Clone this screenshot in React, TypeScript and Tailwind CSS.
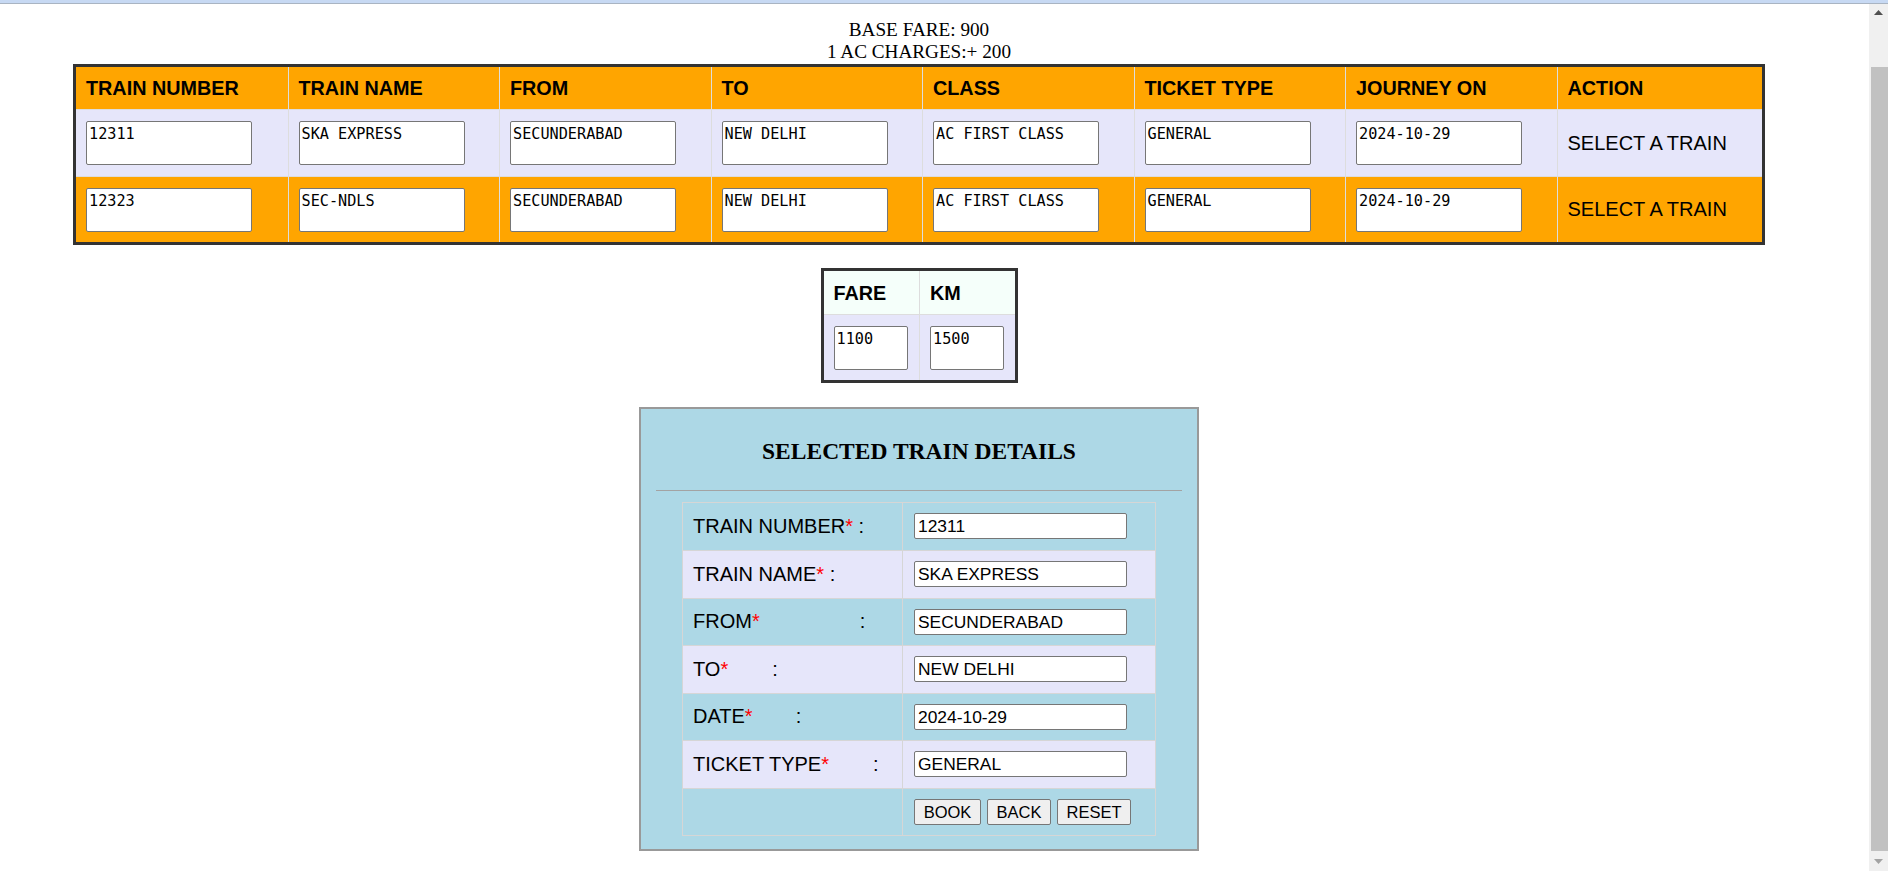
import React from "react";

const columns = [
  "TRAIN NUMBER",
  "TRAIN NAME",
  "FROM",
  "TO",
  "CLASS",
  "TICKET TYPE",
  "JOURNEY ON",
  "ACTION",
];

const trains = [
  {
    no: "12311",
    name: "SKA EXPRESS",
    from: "SECUNDERABAD",
    to: "NEW DELHI",
    cls: "AC FIRST CLASS",
    type: "GENERAL",
    date: "2024-10-29",
    bg: "bg-[#e6e6fa]",
  },
  {
    no: "12323",
    name: "SEC-NDLS",
    from: "SECUNDERABAD",
    to: "NEW DELHI",
    cls: "AC FIRST CLASS",
    type: "GENERAL",
    date: "2024-10-29",
    bg: "bg-[#ffa500]",
  },
];

// label, gap before colon (px), field value
const details = [
  { label: "TRAIN NUMBER", gap: "ml-[5.5px]", value: "12311" },
  { label: "TRAIN NAME", gap: "ml-[5.5px]", value: "SKA EXPRESS" },
  { label: "FROM", gap: "ml-[100px]", value: "SECUNDERABAD" },
  { label: "TO", gap: "ml-[44px]", value: "NEW DELHI" },
  { label: "DATE", gap: "ml-[43px]", value: "2024-10-29" },
  { label: "TICKET TYPE", gap: "ml-[44px]", value: "GENERAL" },
];

const Box = ({ value, w }: { value: string; w: string }) => (
  <textarea
    readOnly
    value={value}
    className={`block h-[44px] ${w} resize-none rounded-[2px] border border-[#767676] bg-white px-[2px] pt-[3px] font-['DejaVu_Sans_Mono',monospace] text-[15.2px] leading-[18px] text-black outline-none`}
  />
);

const App = () => {
  return (
    <div className="flex h-[871px] w-full flex-col overflow-hidden bg-white">
      {/* window top edge */}
      <div className="h-[4px] border-b border-[#a9b4c2] bg-[#c7d9f3]" />

      <div className="flex flex-1">
        <div className="flex-1">
          <div className="flex w-[1838px] flex-col items-center pt-[15px]">
            <div className="text-center font-['Liberation_Serif',serif] text-[19.2px] leading-[22.3px] text-black">
              <div>BASE FARE: 900</div>
              <div>1 AC CHARGES:+ 200</div>
            </div>

            {/* trains */}
            <table className="w-[1692px] table-fixed border-separate border-spacing-0 border-[3px] border-[#333] font-['Liberation_Sans',Arial,sans-serif] text-black">
              <colgroup>
                <col className="w-[211.5px]" />
                <col className="w-[211.5px]" />
                <col className="w-[211.5px]" />
                <col className="w-[211.5px]" />
                <col className="w-[211.5px]" />
                <col className="w-[211.5px]" />
                <col className="w-[211.5px]" />
                <col />
              </colgroup>
              <thead>
                <tr className="bg-[#ffa500]">
                  {columns.map((c, i) => (
                    <th
                      key={c}
                      className={`border-b border-[#ddd] px-[10px] py-[10px] text-left text-[19.8px] font-bold leading-[22px] ${
                        i > 0 ? "border-l" : ""
                      }`}
                    >
                      {c}
                    </th>
                  ))}
                </tr>
              </thead>
              <tbody>
                {trains.map((t, r) => {
                  const cells = [t.no, t.name, t.from, t.to, t.cls, t.type, t.date];
                  return (
                    <tr key={t.no} className={t.bg}>
                      {cells.map((v, i) => (
                        <td
                          key={i}
                          className={`border-[#ddd] px-[10px] pt-[11px] align-top ${
                            i > 0 ? "border-l" : ""
                          } ${r === 0 ? "border-b pb-[11px]" : "pb-[10px]"}`}
                        >
                          <Box value={v} w="w-[166px]" />
                        </td>
                      ))}
                      <td
                        className={`border-l border-[#ddd] px-[10px] align-middle text-[20px] ${
                          r === 0 ? "border-b" : ""
                        }`}
                      >
                        SELECT A TRAIN
                      </td>
                    </tr>
                  );
                })}
              </tbody>
            </table>

            {/* fare */}
            <table className="mt-[23px] w-[197px] table-fixed border-separate border-spacing-0 border-[3px] border-[#333] font-['Liberation_Sans',Arial,sans-serif] text-black">
              <thead>
                <tr className="bg-[#f5fffa]">
                  <th className="border-b border-[#ddd] px-[10px] pt-[11px] pb-[10px] text-left text-[19.8px] font-bold leading-[22px]">
                    FARE
                  </th>
                  <th className="border-b border-l border-[#ddd] px-[10px] pt-[11px] pb-[10px] text-left text-[19.8px] font-bold leading-[22px]">
                    KM
                  </th>
                </tr>
              </thead>
              <tbody>
                <tr className="bg-[#e6e6fa]">
                  <td className="px-[10px] pt-[11px] pb-[10px] align-top">
                    <Box value="1100" w="w-[74px]" />
                  </td>
                  <td className="border-l border-[#ddd] px-[10px] pt-[11px] pb-[10px] align-top">
                    <Box value="1500" w="w-[74px]" />
                  </td>
                </tr>
              </tbody>
            </table>

            {/* selected train */}
            <div className="mt-[24px] flex w-[560px] flex-col border-2 border-[#999] bg-[#add8e6] pt-[29px] pb-[12.5px]">
              <h3 className="text-center font-['Liberation_Serif',serif] text-[23.5px] font-bold leading-[27px] text-black">
                SELECTED TRAIN DETAILS
              </h3>
              <hr className="mx-[15px] mt-[25px] border-t border-[#a3a3a3]" />
              <table className="mx-auto mt-[11px] w-[474px] table-fixed border-separate border-spacing-0 border border-[#d6d6d6] font-['Liberation_Sans',Arial,sans-serif] text-black">
                <colgroup>
                  <col className="w-[219px]" />
                  <col />
                </colgroup>
                <tbody>
                  {details.map((d, i) => (
                    <tr
                      key={d.label}
                      className={`h-[47.5px] ${i % 2 === 0 ? "bg-[#add8e6]" : "bg-[#e6e6fa]"}`}
                    >
                      <td
                        className={`border-[#d6d6d6] pl-[10px] align-middle text-[20px] leading-[23px] whitespace-nowrap ${
                          i > 0 ? "border-t" : ""
                        }`}
                      >
                        {d.label}
                        <span className="text-[#ff0000]">*</span>
                        <span className={d.gap}>:</span>
                      </td>
                      <td
                        className={`border-l border-[#d6d6d6] pl-[11px] align-middle ${
                          i > 0 ? "border-t" : ""
                        }`}
                      >
                        <input
                          readOnly
                          value={d.value}
                          className="block h-[26px] w-[213px] rounded-[2px] border border-[#767676] bg-white px-[3px] font-['Liberation_Sans',Arial,sans-serif] text-[17.4px] text-black outline-none"
                        />
                      </td>
                    </tr>
                  ))}
                  <tr className="h-[47.5px] bg-[#add8e6]">
                    <td className="border-t border-[#d6d6d6]" />
                    <td className="border-t border-l border-[#d6d6d6] pl-[11px] align-middle">
                      <div className="flex gap-[6px]">
                        {[
                          ["BOOK", "w-[67px]"],
                          ["BACK", "w-[64px]"],
                          ["RESET", "w-[74px]"],
                        ].map(([b, w]) => (
                          <button
                            key={b}
                            type="button"
                            className={`h-[26px] ${w} rounded-[2px] border border-[#767676] bg-[#efefef] text-center text-[16.5px] leading-none text-black`}
                          >
                            {b}
                          </button>
                        ))}
                      </div>
                    </td>
                  </tr>
                </tbody>
              </table>
            </div>
          </div>
        </div>

        {/* page scrollbar */}
        <div className="flex w-[19px] flex-col bg-[#f0f0f0]">
          <div className="flex h-[17px] items-center justify-center">
            <svg width="9" height="5" viewBox="0 0 9 5">
              <polygon points="4.5,0 9,5 0,5" fill="#505050" />
            </svg>
          </div>
          <div className="h-[46px]" />
          <div className="ml-[2px] flex-1 bg-[#c1c1c1]" />
          <div className="flex h-[20px] items-center justify-center">
            <svg width="9" height="5" viewBox="0 0 9 5">
              <polygon points="0,0 9,0 4.5,5" fill="#a3a3a3" />
            </svg>
          </div>
        </div>
      </div>
    </div>
  );
};

export default App;
